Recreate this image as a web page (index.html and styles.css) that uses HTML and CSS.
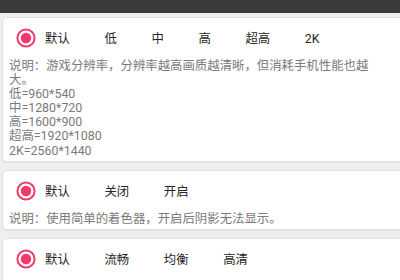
FILE: index.html
```html
<!DOCTYPE html>
<html lang="zh">
<head>
<meta charset="utf-8">
<link rel="stylesheet" href="styles.css">
</head>
<body>
<div class="topbar"></div>
<div class="list">
  <div class="card">
    <div class="row">
      <div class="opt"><span class="radio on"><svg viewBox="0 0 20 20" width="20" height="20"><circle cx="10" cy="10" r="8.6" fill="none" stroke="#f2396d" stroke-width="2"/><circle cx="10" cy="10" r="5.2" fill="#f2396d"/></svg></span><span>默认</span></div>
      <div class="opt"><span class="radio"></span><span>低</span></div>
      <div class="opt"><span class="radio"></span><span>中</span></div>
      <div class="opt"><span class="radio"></span><span>高</span></div>
      <div class="opt"><span class="radio"></span><span>超高</span></div>
      <div class="opt"><span class="radio"></span><span>2K</span></div>
    </div>
    <div class="desc">说明：游戏分辨率，分辨率越高画质越清晰，但消耗手机性能也越大。<br>低=960*540<br>中=1280*720<br>高=1600*900<br>超高=1920*1080<br>2K=2560*1440</div>
  </div>
  <div class="card">
    <div class="row">
      <div class="opt"><span class="radio on"><svg viewBox="0 0 20 20" width="20" height="20"><circle cx="10" cy="10" r="8.6" fill="none" stroke="#f2396d" stroke-width="2"/><circle cx="10" cy="10" r="5.2" fill="#f2396d"/></svg></span><span>默认</span></div>
      <div class="opt"><span class="radio"></span><span>关闭</span></div>
      <div class="opt"><span class="radio"></span><span>开启</span></div>
    </div>
    <div class="desc">说明：使用简单的着色器，开启后阴影无法显示。</div>
  </div>
  <div class="card">
    <div class="row">
      <div class="opt"><span class="radio on"><svg viewBox="0 0 20 20" width="20" height="20"><circle cx="10" cy="10" r="8.6" fill="none" stroke="#f2396d" stroke-width="2"/><circle cx="10" cy="10" r="5.2" fill="#f2396d"/></svg></span><span>默认</span></div>
      <div class="opt"><span class="radio"></span><span>流畅</span></div>
      <div class="opt"><span class="radio"></span><span>均衡</span></div>
      <div class="opt"><span class="radio"></span><span>高清</span></div>
    </div>
    <div class="desc">说明：游戏画质设置，高清画质需要高性能手机。</div>
  </div>
</div>
</body>
</html>
```
FILE: styles.css
```css
html, body {
  margin: 0;
  padding: 0;
  overflow: hidden;
}
body {
  background: #efefef;
  font-family: Roboto, "Noto Sans CJK SC", sans-serif;
  width: 400px;
  height: 280px;
}
.topbar {
  height: 13px;
  background: #3a3a3a;
}
.list {
  display: flex;
  flex-direction: column;
  gap: 8px;
  padding: 4px 0 0 2px;
}
.card {
  background: #fff;
  border: 1px solid #e0e0e0;
  border-radius: 4px;
  margin-right: -10px;
  padding: 5px 6px 3px 6px;
  box-shadow: 0 1px 1px rgba(0,0,0,0.05);
}
.row {
  display: flex;
  align-items: center;
  height: 30px;
  padding-left: 1.5px;
}
.opt {
  display: flex;
  align-items: center;
  font-size: 12.4px;
  color: #262626;
}
.radio {
  display: block;
  width: 20px;
  height: 20px;
  margin: 0 9px 0 5.6px;
}
.radio svg {
  display: block;
}
.desc {
  margin-top: 6px;
  width: 368px;
  font-size: 12.4px;
  line-height: 14.1px;
  color: #7a7a7a;
}
```
